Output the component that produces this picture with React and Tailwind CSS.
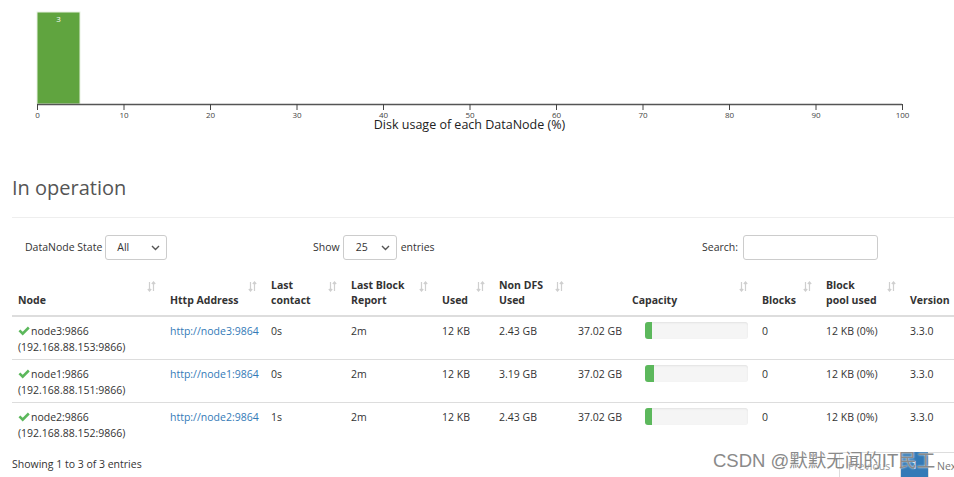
import React from 'react';

const ticks = [0, 10, 20, 30, 40, 50, 60, 70, 80, 90, 100];

const rows = [
  { node: 'node3:9866', ip: '(192.168.88.153:9866)', http: 'http://node3:9864', contact: '0s', nonDfs: '2.43 GB', bar: 7 },
  { node: 'node1:9866', ip: '(192.168.88.151:9866)', http: 'http://node1:9864', contact: '0s', nonDfs: '3.19 GB', bar: 9 },
  { node: 'node2:9866', ip: '(192.168.88.152:9866)', http: 'http://node2:9864', contact: '1s', nonDfs: '2.43 GB', bar: 7 },
];

// sort arrows in the table header
const SortIcon = () => (
  <svg className="absolute right-[8px] top-[3px]" width="9" height="11" viewBox="0 0 9 11" fill="none" stroke="#cfcfcf" strokeWidth="1.2">
    <path d="M2.5 1v9M0.8 8l1.7 2 1.7-2" />
    <path d="M6.5 10V1M4.8 3l1.7-2 1.7 2" />
  </svg>
);

const Chevron = () => (
  <svg width="9" height="6" viewBox="0 0 9 6" fill="none" stroke="#555" strokeWidth="1.4">
    <path d="M1 1l3.5 3.5L8 1" />
  </svg>
);

const Check = () => (
  <svg className="inline-block align-[-1px] mr-[1px]" width="12" height="10" viewBox="0 0 12 10">
    <path d="M0.5 5.2l1.8-1.8 2.4 2.4L9.9 0.6l1.8 1.8-7 7z" fill="#5cb85c" />
  </svg>
);

const Chart = () => (
  <svg width="954" height="140" className="block">
    <rect x="37" y="12" width="43" height="92" fill="#60a43f" stroke="#e8f2e2" strokeWidth="1" />
    <text x="58.5" y="22" fill="#fff" fontSize="8" textAnchor="middle">3</text>
    <line x1="37" y1="104.5" x2="902" y2="104.5" stroke="#555" strokeWidth="1.5" />
    {ticks.map((t) => {
      const x = 37.5 + t * 8.65;
      return (
        <g key={t}>
          <line x1={x} y1="104" x2={x} y2="110" stroke="#444" strokeWidth="1" />
          <text x={x} y="118" fill="#444" fontSize="8" textAnchor="middle">{t}</text>
        </g>
      );
    })}
    <text x="469.5" y="129" fill="#222" fontSize="12.5" textAnchor="middle">Disk usage of each DataNode (%)</text>
  </svg>
);

const Th = ({ children, sort = true }) => (
  <th className="relative align-bottom text-left font-bold pl-[6px] pr-[18px] pb-[7px] leading-[15px]">
    {children}
    {sort && <SortIcon />}
  </th>
);

export default function App() {
  return (
    <div className="relative w-[954px] h-[477px] overflow-hidden bg-white text-[#333] text-[10.5px]" style={{ fontFamily: '"Open Sans", "Noto Sans", sans-serif' }}>
      <Chart />

      <div className="pl-[12px]">
        <h2 className="text-[20px] leading-[28px] text-[#555] mt-[34px]">In operation</h2>
        <div className="h-px bg-[#eee] mt-[15px]" />

        <div className="flex items-center h-[25px] mt-[17px]">
          <div className="flex items-center w-[301px] pl-[13px]">
            <span className="mr-[3px]">DataNode State</span>
            <div className="flex items-center justify-between w-[62px] h-[25px] border border-[#ccc] rounded-[3px] pl-[11px] pr-[6px]">
              <span>All</span>
              <Chevron />
            </div>
          </div>
          <div className="flex items-center">
            <span className="mr-[3px]">Show</span>
            <div className="flex items-center justify-between w-[54px] h-[25px] border border-[#ccc] rounded-[3px] pl-[12px] pr-[6px]">
              <span>25</span>
              <Chevron />
            </div>
            <span className="ml-[4px]">entries</span>
          </div>
          <div className="flex items-center ml-auto mr-[76px]">
            <span className="mr-[5px]">Search:</span>
            <div className="w-[135px] h-[25px] border border-[#ccc] rounded-[3px]" />
          </div>
        </div>

        <table className="table-fixed border-collapse w-[942px] mt-[18px]">
          <colgroup>
            <col className="w-[152px]" />
            <col className="w-[101px]" />
            <col className="w-[80px]" />
            <col className="w-[91px]" />
            <col className="w-[57px]" />
            <col className="w-[79px]" />
            <col className="w-[54px]" />
            <col className="w-[130px]" />
            <col className="w-[64px]" />
            <col className="w-[84px]" />
            <col className="w-[50px]" />
          </colgroup>
          <thead>
            <tr className="border-b-2 border-[#ddd]">
              <Th>Node</Th>
              <Th>Http Address</Th>
              <Th>Last<br />contact</Th>
              <Th>Last Block<br />Report</Th>
              <Th>Used</Th>
              <Th>Non DFS<br />Used</Th>
              <Th sort={false}></Th>
              <Th>Capacity</Th>
              <Th>Blocks</Th>
              <Th>Block<br />pool used</Th>
              <Th sort={false}>Version</Th>
            </tr>
          </thead>
          <tbody>
            {rows.map((r, i) => (
              <tr key={r.node} className={`${i < rows.length - 1 ? 'border-b border-[#ddd]' : ''} align-top leading-[16px]`}>
                <td className="pl-[6px] pt-[6px] pb-[4px] whitespace-nowrap">
                  <Check />{r.node}
                  <br />
                  {r.ip}
                </td>
                <td className="pl-[6px] pt-[6px] pb-[4px] text-[#337ab7] whitespace-nowrap">{r.http}</td>
                <td className="pl-[6px] pt-[6px] pb-[4px]">{r.contact}</td>
                <td className="pl-[6px] pt-[6px] pb-[4px]">2m</td>
                <td className="pl-[6px] pt-[6px] pb-[4px] whitespace-nowrap">12 KB</td>
                <td className="pl-[6px] pt-[6px] pb-[4px] whitespace-nowrap">{r.nonDfs}</td>
                <td className="pl-[6px] pt-[6px] pb-[4px] whitespace-nowrap">37.02 GB</td>
                <td className="pl-[19px] pt-[6px] pb-[4px] pr-[8px]">
                  <div className="h-[17px] mt-[-1px] w-[103px] bg-[#f5f5f5] rounded-[3px] overflow-hidden shadow-[inset_0_1px_2px_rgba(0,0,0,0.08)]">
                    <div className="h-full bg-[#5cb85c]" style={{ width: r.bar }} />
                  </div>
                </td>
                <td className="pl-[6px] pt-[6px] pb-[4px]">0</td>
                <td className="pl-[6px] pt-[6px] pb-[4px] whitespace-nowrap">12 KB (0%)</td>
                <td className="pl-[6px] pt-[6px] pb-[4px]">3.3.0</td>
              </tr>
            ))}
          </tbody>
        </table>

        <div className="flex items-start mt-[7px]">
          <span className="w-[827px] shrink-0 mt-[4px] leading-[16px]">Showing 1 to 3 of 3 entries</span>
          <div className="flex shrink-0 h-[30px] text-[10.5px]">
            <div className="w-[62px] border border-[#ddd] rounded-l-[3px] pl-[8px] pt-[6px] text-[#999]">Previous</div>
            <div className="bg-[#337ab7] text-white w-[27px] pt-[6px] text-center">1</div>
            <div className="border border-[#ddd] pl-[8px] pr-[6px] pt-[6px] text-[#777]">Next</div>
          </div>
        </div>
      </div>

      {/* watermark */}
      <div
        className="absolute left-[713px] top-[449px] text-[18.5px] leading-[24px] text-[#8a8a8a] whitespace-nowrap"
        style={{ fontFamily: '"Liberation Sans", "Noto Sans CJK SC", sans-serif', textShadow: '0 0 2px #fff' }}
      >
        CSDN @默默无闻的IT民工
      </div>
    </div>
  );
}
